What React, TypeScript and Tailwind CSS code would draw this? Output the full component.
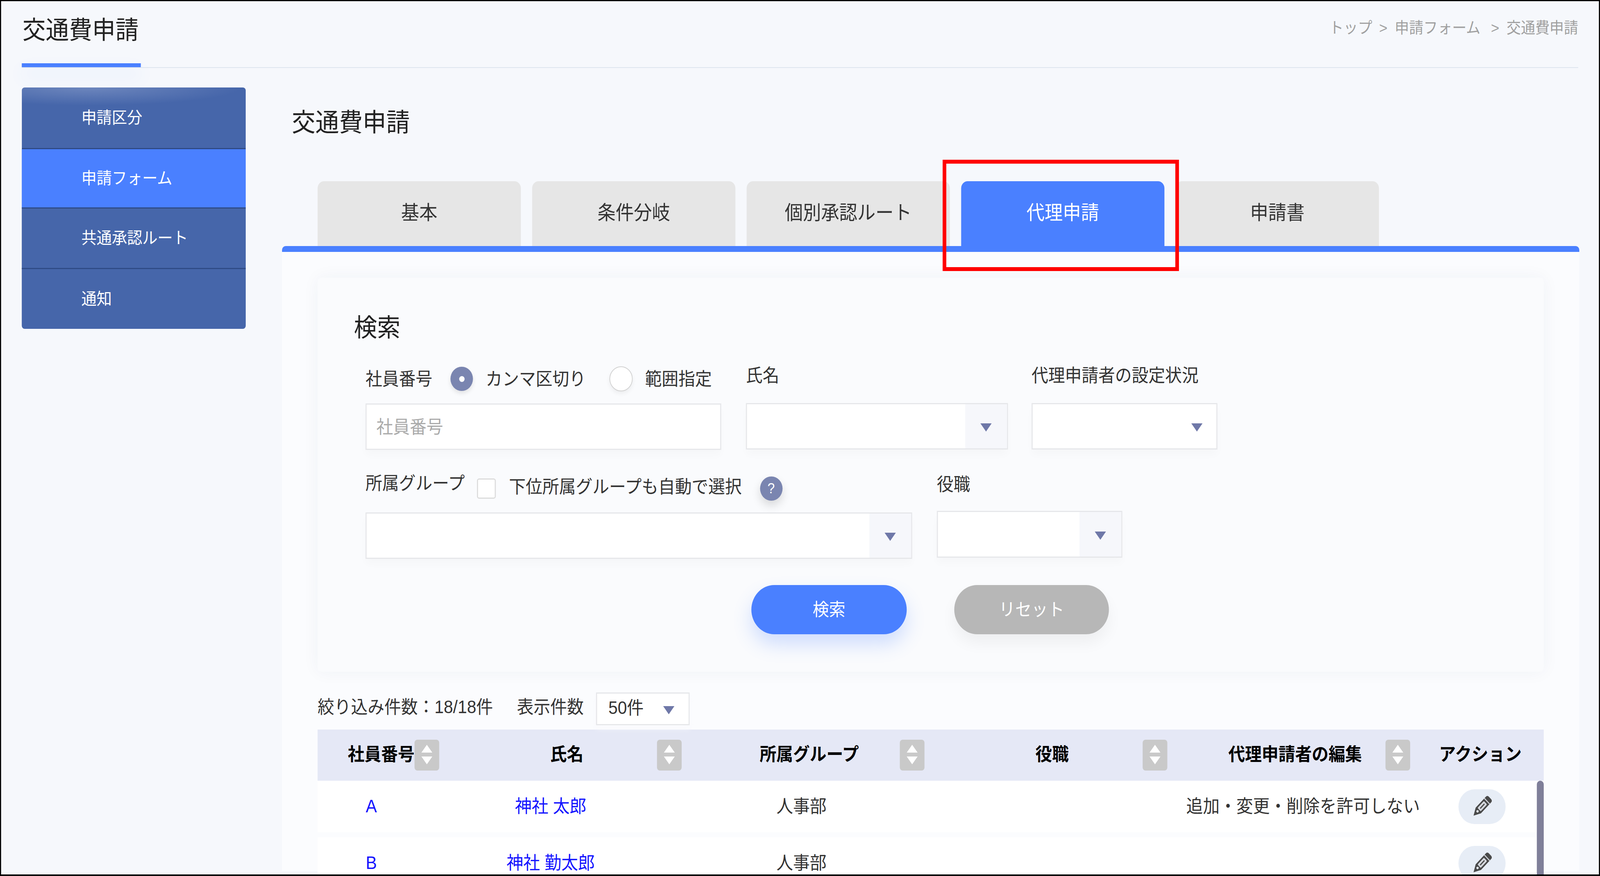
import React from "react";

const tabs = ["基本", "条件分岐", "個別承認ルート", "代理申請", "申請書"];

const sideItems = [
  { label: "申請区分", className: "h-[158px] border-b-[3px] border-[#2f4b86] bg-[radial-gradient(ellipse_420px_46px_at_30%_0%,#6d86bd,#4666aa)] rounded-t-[8px]" },
  { label: "申請フォーム", className: "h-[152px] border-b-[3px] border-[#2f4b86] bg-[#4a80ff]" },
  { label: "共通承認ルート", className: "h-[155px] border-b-[3px] border-[#2f4b86] bg-[#4666aa]" },
  { label: "通知", className: "h-[153px] bg-[#4666aa] rounded-b-[8px]" },
];

const Arrow = ({ className = "" }: { className?: string }) => (
  <svg viewBox="0 0 31 21" className={`w-[31px] h-[21px] ${className}`}>
    <path d="M0 0H31L15.5 21Z" fill="#6f78a8" />
  </svg>
);

const SelectBox = ({ className, split = true }: { className: string; split?: boolean }) => (
  <div className={`flex border-[3px] border-[#e6e7ea] bg-white shadow-[0_14px_20px_rgba(0,0,0,0.02)] ${className}`}>
    <div className="flex-1" />
    {split ? (
      <div className="w-[115px] bg-[#f6f7fb] flex items-center justify-center pt-[6px]">
        <Arrow />
      </div>
    ) : (
      <div className="flex items-center pr-[38px] pt-[6px]">
        <Arrow />
      </div>
    )}
  </div>
);

const SortButton = () => (
  <div className="w-[68px] h-[79px] rounded-[8px] bg-[#c9c9c9] shrink-0">
    <svg viewBox="0 0 68 79" className="w-[68px] h-[79px]">
      <path d="M34 13L49 33H19Z" fill="#fff" />
      <path d="M34 63L49 43H19Z" fill="#fff" />
    </svg>
  </div>
);

const HeadCell = ({ label, className }: { label: string; className: string }) => (
  <div className={`flex items-center h-full ${className}`}>
    <div className="flex-1 text-center text-[46px] leading-none font-bold text-black pb-[6px]">{label}</div>
    <SortButton />
  </div>
);

const EditButton = () => (
  <div className="w-[130px] h-[89px] rounded-[45px] bg-[#e7edf6] flex items-center justify-center">
    <svg viewBox="0 0 60 60" className="w-[62px] h-[62px]">
      <g transform="rotate(45 30 30)">
        <path d="M20 6q0-6 6-6h8q6 0 6 6V44L30 62L20 44Z" fill="#4a4a4a" />
        <rect x="24" y="17" width="12" height="24" rx="2" fill="#d5d8de" />
        <rect x="28.5" y="21" width="3" height="16" fill="#4a4a4a" />
        <rect x="20" y="10" width="20" height="2.5" fill="#d5d8de" />
        <circle cx="30" cy="47" r="3" fill="#e7edf6" />
      </g>
    </svg>
  </div>
);

const TableRow = ({ id, name, note }: { id: string; name: string; note?: string }) => (
  <div className="flex items-center h-[132px] bg-white mb-[13px] text-[46px] leading-none">
    <div className="w-[296px] text-center text-[#1414ff] pb-[3px]">{id}</div>
    <div className="w-[692px] text-center text-[#1414ff] pb-[3px]">{name}</div>
    <div className="w-[690px] text-center text-[#333] pb-[3px]">人事部</div>
    <div className="w-[714px]" />
    <div className="w-[646px] text-center text-[#333] whitespace-nowrap pb-[3px]">{note}</div>
    <div className="pl-[105px]">
      <EditButton />
    </div>
  </div>
);

// the browser window stops at 4096px wide, so the 4408px page is narrowed to fit it
export default function App() {
  return (
    <div className="relative w-[4408px] h-[2243px] origin-top-left scale-x-[0.92922] overflow-hidden border-[3px] border-b-[4px] border-black bg-[#f6f8fc] text-[#333] font-['Liberation_Sans','Noto_Sans_CJK_JP',sans-serif]">
      {/* page header */}
      <div className="mx-[57px] h-[171px] border-b-2 border-[#dde4ee] flex justify-between">
        <div className="w-[328px] flex flex-col">
          <div className="flex-1 flex items-center pb-[12px] pl-[2px] text-[64px] leading-none text-[#222] whitespace-nowrap">交通費申請</div>
          <div className="h-[10px] bg-[#4a80ff] shadow-[0_22px_44px_rgba(74,128,255,0.14)]" />
        </div>
        <div className="flex items-center pb-[31px] text-[39.5px] leading-none text-[#a0a0a0] whitespace-nowrap">
          <span>トップ</span>
          <span className="ml-[19px] mr-[20px]">&gt;</span>
          <span>申請フォーム</span>
          <span className="ml-[29px] mr-[20px]">&gt;</span>
          <span>交通費申請</span>
        </div>
      </div>

      <div className="flex pl-[57px] pt-[50px]">
        {/* side menu */}
        <div className="w-[617px] h-[618px] shrink-0 flex flex-col">
          {sideItems.map((item) => (
            <div key={item.label} className={`flex items-center pl-[164px] text-[42px] leading-none text-white ${item.className}`}>
              {item.label}
            </div>
          ))}
        </div>

        <div className="ml-[100px] w-[3574px] shrink-0">
          <div className="pl-[27px] h-[64px] mt-[57px] flex items-center text-[65px] leading-none text-[#222]">交通費申請</div>

          {/* tabs */}
          <div className="flex gap-[31px] pl-[98px] mt-[119px]">
            {tabs.map((tab, i) => (
              <div
                key={tab}
                className={
                  i === 3
                    ? "w-[560px] h-[166px] rounded-t-[18px] bg-[#4a80ff] text-white flex items-center justify-center pb-[4px] text-[50px] leading-none"
                    : "w-[560px] h-[166px] rounded-t-[18px] bg-[#e6e6e6] text-[#333] flex items-center justify-center pb-[4px] text-[50px] leading-none"
                }
              >
                {tab}
              </div>
            ))}
          </div>

          <div className="border-t-[15px] border-[#4a80ff] rounded-t-[10px] bg-[#fbfcfe] px-[98px] pt-[66px] h-[1600px]">
            {/* search card */}
            <div className="h-[1009px] rounded-[10px] bg-[#fafbfd] shadow-[0_0_44px_rgba(40,50,90,0.05)] pt-[96px]">
              <div className="pl-[100px] text-[64px] leading-none text-[#222]">検索</div>

              <div className="pl-[132px] mt-[69px] text-[46px] leading-none">
                <div className="flex">
                  <div className="w-[980px]">
                    <div className="h-[60px] flex items-center">
                      <span>社員番号</span>
                      <div className="ml-[50px] w-[62px] h-[62px] rounded-full bg-[#7a85b0] shadow-[0_6px_12px_rgba(0,0,0,0.1)] flex items-center justify-center">
                        <div className="w-[15px] h-[15px] rounded-full bg-white" />
                      </div>
                      <span className="ml-[35px]">カンマ区切り</span>
                      <div className="ml-[65px] w-[64px] h-[64px] rounded-full border-2 border-[#d2d2d2] bg-white shadow-[0_6px_12px_rgba(0,0,0,0.06)]" />
                      <span className="ml-[34px]">範囲指定</span>
                    </div>
                    <div className="mt-[33px] h-[119px] border-[3px] border-[#e6e7ea] bg-white shadow-[0_14px_20px_rgba(0,0,0,0.02)] flex items-center pl-[27px] text-[#aaa]">社員番号</div>
                  </div>
                  <div className="ml-[68px] w-[722px]">
                    <div className="h-[42px] flex items-center">氏名</div>
                    <SelectBox className="mt-[50px] h-[119px]" />
                  </div>
                  <div className="ml-[65px] w-[512px]">
                    <div className="h-[42px] flex items-center whitespace-nowrap">代理申請者の設定状況</div>
                    <SelectBox className="mt-[50px] h-[119px]" split={false} />
                  </div>
                </div>

                <div className="flex mt-[65px]">
                  <div className="w-[1506px]">
                    <div className="h-[68px] flex items-center">
                      <span className="self-start h-[40px] flex items-center">所属グループ</span>
                      <div className="ml-[34px] w-[52px] h-[52px] rounded-[6px] border-[3px] border-[#dcdcdc] bg-white" />
                      <span className="ml-[36px] pb-[10px]">下位所属グループも自動で選択</span>
                      <div className="ml-[50px] w-[62px] h-[62px] rounded-full bg-[#7a85b0] shadow-[0_12px_24px_rgba(0,0,0,0.14)] flex items-center justify-center text-white text-[36px]">?</div>
                    </div>
                    <SelectBox className="mt-[27px] h-[119px]" />
                  </div>
                  <div className="ml-[68px] w-[511px]">
                    <div className="h-[46px] flex items-center">役職</div>
                    <SelectBox className="mt-[45px] h-[120px]" />
                  </div>
                </div>

                <div className="flex mt-[67px] pl-[1063px] gap-[131px] text-white text-[45px]">
                  <div className="w-[428px] h-[126px] rounded-[63px] bg-[#4a80ff] shadow-[0_26px_50px_rgba(74,128,255,0.24)] flex items-center justify-center">検索</div>
                  <div className="w-[426px] h-[126px] rounded-[63px] bg-[#b7b7b7] shadow-[0_22px_40px_rgba(0,0,0,0.05)] flex items-center justify-center">リセット</div>
                </div>
              </div>
            </div>

            {/* list controls */}
            <div className="mt-[53px] h-[84px] flex items-center text-[46px] leading-none relative z-10">
              <span className="pb-[10px] whitespace-nowrap">絞り込み件数：18/18件</span>
              <span className="ml-[66px] pb-[10px]">表示件数</span>
              <div className="ml-[34px] w-[258px] h-[84px] border-[3px] border-[#e6e7ea] bg-white shadow-[0_10px_14px_rgba(250,250,253,0.6)] flex items-center pl-[31px] pr-[39px] justify-between">
                <span className="pb-[6px]">50件</span>
                <Arrow className="mt-[6px]" />
              </div>
            </div>

            {/* table */}
            <div className="mt-[11px] relative">
              <div className="flex h-[131px] bg-[#e5e8f6]">
                <div className="w-[332px] h-full flex items-center pl-[83px]">
                  <span className="text-[46px] leading-none font-bold text-black pb-[6px] whitespace-nowrap">社員番号</span>
                  <SortButton />
                </div>
                <HeadCell label="氏名" className="w-[671px] pl-[106px]" />
                <HeadCell label="所属グループ" className="w-[669px] pl-[102px]" />
                <HeadCell label="役職" className="w-[669px] pl-[102px]" />
                <HeadCell label="代理申請者の編集" className="w-[669px] pl-[103px]" />
                <div className="w-[365px] h-full flex items-center justify-center text-[46px] leading-none font-bold text-black pb-[6px] pl-[22px]">アクション</div>
              </div>
              <div className="relative">
                <TableRow id="A" name="神社 太郎" note="追加・変更・削除を許可しない" />
                <TableRow id="B" name="神社 勤太郎" />
                <div className="absolute top-0 right-0 w-[19px] h-full rounded-t-[10px] bg-[#7f7f99]" />
              </div>
            </div>
          </div>
        </div>
      </div>

      {/* red annotation around the active tab */}
      <div className="absolute left-[2594px] top-[406px] w-[651px] h-[285px] border-[10px] border-[#ff0000]" />
    </div>
  );
}
